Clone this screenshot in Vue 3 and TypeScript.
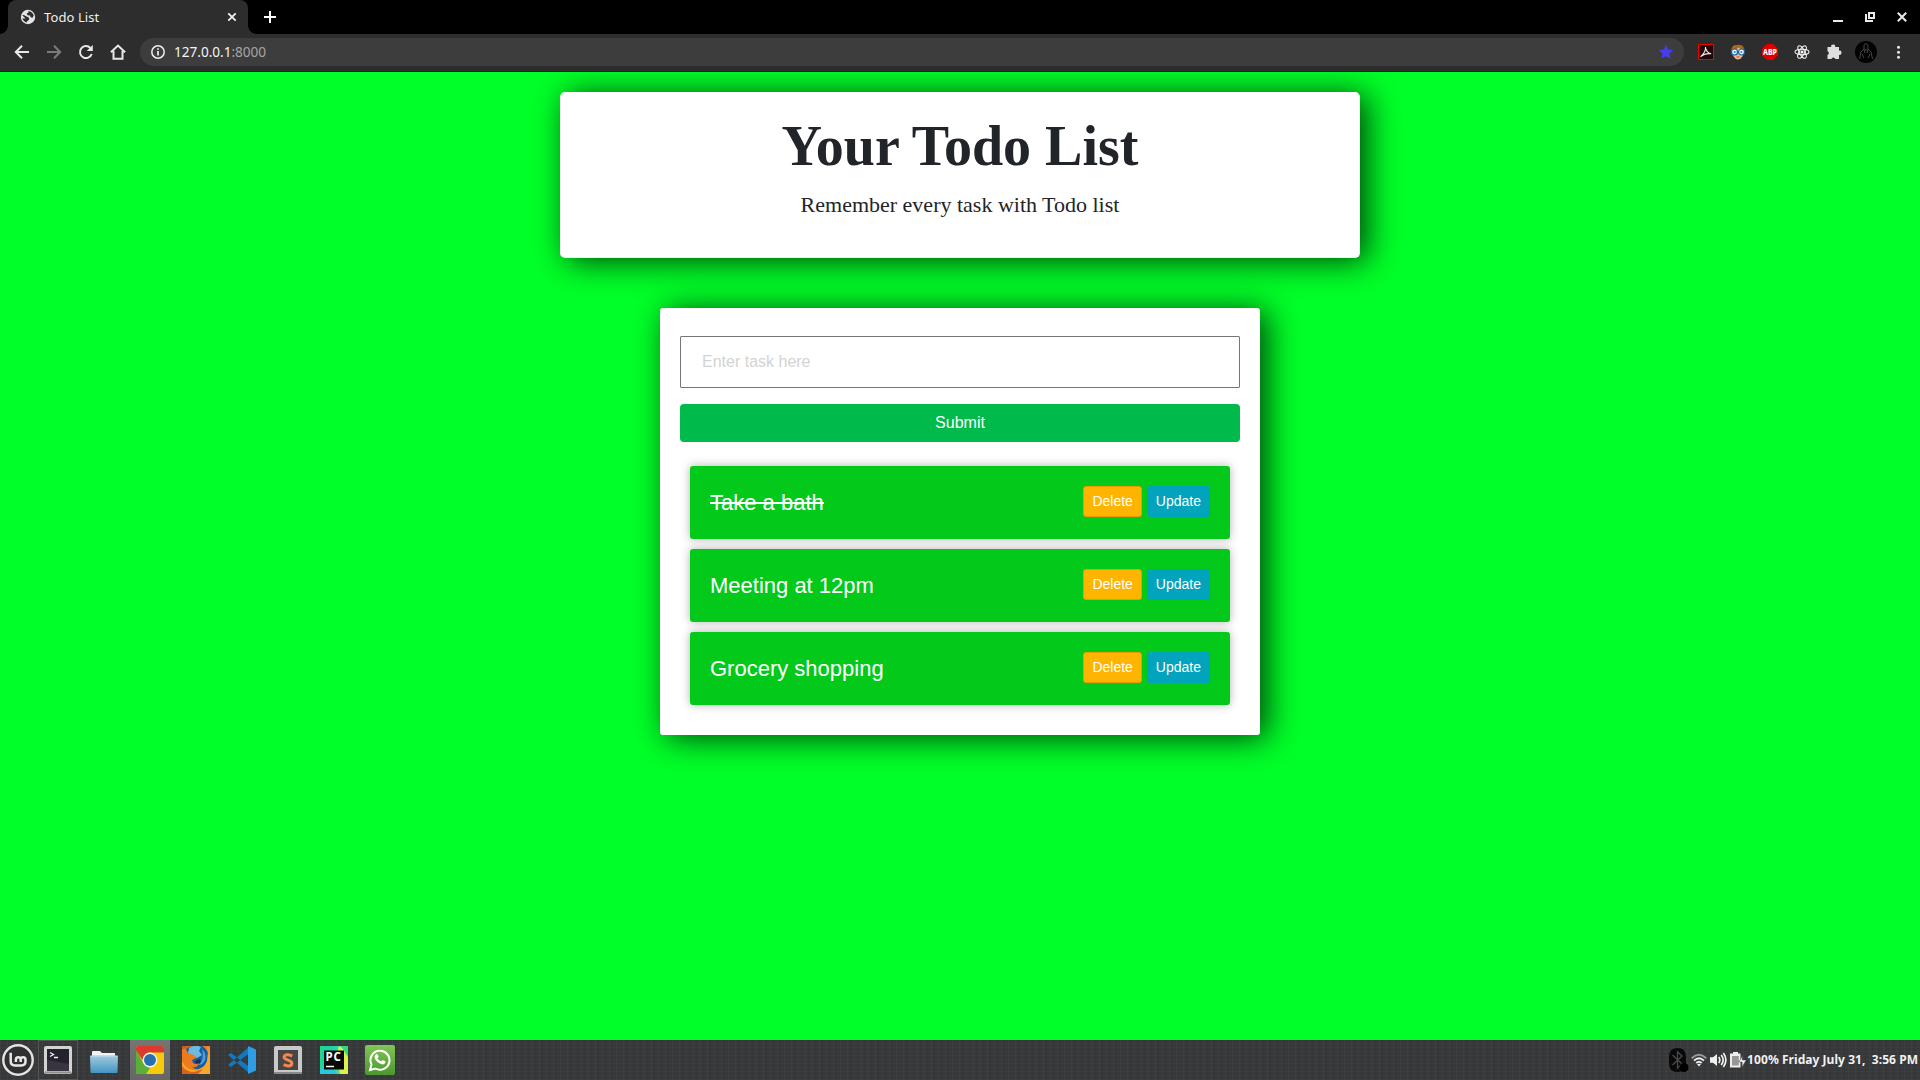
<script setup lang="ts">
import { ref } from 'vue'

interface Task {
  id: number
  title: string
  done: boolean
}

const draft = ref('')
const tasks = ref<Task[]>([
  { id: 1, title: 'Take a bath', done: true },
  { id: 2, title: 'Meeting at 12pm', done: false },
  { id: 3, title: 'Grocery shopping', done: false },
])
</script>

<template>
  <div class="desktop">
    <header class="tabstrip">
      <div class="tab">
        <svg class="favicon" viewBox="0 0 16 16" width="16" height="16">
          <circle cx="8" cy="8" r="7.2" fill="#e3e4e6" />
          <path d="M2.2 6.2Q4 5.800 5.600 7L8.600 8.600Q9.800 9.600 8.800 11L6.800 12.400 7.200 13.600Q3.600 13 2.400 9.600L5.600 9.400zM8.200 2.200Q12.600 2.400 13.700 6.600L12.600 8.800 10.600 8.200 10 6.600 7.600 6.200 6.600 4.600 8.400 3.800z" fill="#2d2d2d" />
        </svg>
        <span class="tab-title">Todo List</span>
        <svg class="tab-close" viewBox="0 0 10 10" width="10" height="10"><path d="M1.300 1.300l7.400 7.400M8.700 1.300L1.300 8.700" stroke="#f1f1f1" stroke-width="1.800" /></svg>
      </div>
      <svg class="new-tab" viewBox="0 0 12 12" width="12" height="12"><path d="M6 0v12M0 6h12" stroke="#fff" stroke-width="2" /></svg>
      <div class="window-controls">
        <svg viewBox="0 0 12 12" width="12" height="12"><path d="M1 10h10" stroke="#e8eaed" stroke-width="2" /></svg>
        <svg viewBox="0 0 12 12" width="12" height="12"><path d="M5 2h5v5H5zM2 3v7h7" fill="none" stroke="#e8eaed" stroke-width="2" /></svg>
        <svg viewBox="0 0 12 12" width="12" height="12"><path d="M1.800 1.800l8.400 8.400M10.200 1.800l-8.400 8.400" stroke="#e8eaed" stroke-width="2" /></svg>
      </div>
    </header>

    <nav class="toolbar">
      <div class="nav-icon"><svg viewBox="0 0 16 16" width="16" height="16"><path d="M15 8H2.300M8 1.800L1.800 8 8 14.200" fill="none" stroke="#e8e8e8" stroke-width="2" /></svg></div>
      <div class="nav-icon"><svg viewBox="0 0 16 16" width="16" height="16"><path d="M1 8h12.700M8 1.800L14.200 8 8 14.200" fill="none" stroke="#7b7b7b" stroke-width="2" /></svg></div>
      <div class="nav-icon"><svg viewBox="0 0 16 16" width="16" height="16"><path d="M13.700 10A6 6 0 1 1 12.400 4" fill="none" stroke="#e8e8e8" stroke-width="2" /><path d="M14.800 1v6H8.700z" fill="#e8e8e8" /></svg></div>
      <div class="nav-icon"><svg viewBox="0 0 16 16" width="16" height="16"><path d="M.9 8.300L8 1.600l7.100 6.700M3.500 7v7.800h9V7" fill="none" stroke="#e8e8e8" stroke-width="2" /></svg></div>
      <div class="omnibox">
        <svg viewBox="0 0 16 16" width="16" height="16"><circle cx="8" cy="8" r="6.200" fill="none" stroke="#eee" stroke-width="1.500" /><path d="M8 7v4.500M8 4.200v1.600" stroke="#eee" stroke-width="1.700" /></svg>
        <span class="url">127.0.0.1<span class="port">:8000</span></span>
        <svg class="star" viewBox="0 0 16 16" width="16" height="16"><path d="M8 .7l2.100 4.900 5.300.5-4 3.500 1.200 5.200L8 12.100l-4.600 2.700 1.200-5.200-4-3.500 5.300-.5z" fill="#443df2" /></svg>
      </div>
      <div class="extensions">
        <div class="ext"><svg viewBox="0 0 16 16" width="16" height="16"><path d="M.5.5h15v15H.5z" fill="#260708" stroke="#f00000" /><path d="M7.400 3c.4 3.500 1.600 5.700 5.600 6.800M7.600 3c0 3.700-1.700 7-5 9.700 3-2.900 6-3.400 10.600-3" fill="none" stroke="#eee" stroke-width="1.100" /></svg></div>
        <div class="ext"><svg viewBox="0 0 16 16" width="16" height="16"><path d="M1.500 10Q0 1 6.500 1q8.500-2 8 8l-2 3.500h-9z" fill="#a7681f" /><path d="M3 5.500q4 0 6-2 1 2 4 2.500v5q-2 4.500-5 4.500T3 11z" fill="#f0b78d" /><circle cx="4.500" cy="8" r="3" fill="#e9fbff" stroke="#1760a9" stroke-width="1.200" /><circle cx="11.500" cy="8" r="3" fill="#e9fbff" stroke="#1760a9" stroke-width="1.200" /><circle cx="4.700" cy="8" r="1.100" fill="#1983d8" /><circle cx="11.300" cy="8" r="1.100" fill="#1983d8" /><path d="M6.500 13h3" stroke="#b64e3d" /></svg></div>
        <div class="ext"><svg viewBox="0 0 16 16" width="16" height="16"><path d="M4.700 0h6.600L16 4.700v6.600L11.300 16H4.700L0 11.300V4.700z" fill="#dc0000" /><text x="1" y="10.900" font-family="Noto Sans, sans-serif" font-weight="800" font-size="8" textLength="14" lengthAdjust="spacingAndGlyphs" fill="#fff">ABP</text></svg></div>
        <div class="ext"><svg viewBox="0 0 16 16" width="16" height="16"><g fill="none" stroke="#f0f0f0" stroke-width="1.100"><ellipse cx="8" cy="8" rx="7" ry="2.700" /><ellipse cx="8" cy="8" rx="7" ry="2.700" transform="rotate(60 8 8)" /><ellipse cx="8" cy="8" rx="7" ry="2.700" transform="rotate(120 8 8)" /></g><circle cx="8" cy="8" r="1.500" fill="#fff" /></svg></div>
        <div class="ext"><svg viewBox="0 0 16 16" width="16" height="16"><path d="M2 3h3.200a2 2 0 1 1 3.900 0H13v3.700a2.100 2.100 0 1 1 0 4.100V15H9.300a2 2 0 0 0-3.900 0H1.500v-4a2 2 0 0 0 0-3.800V3z" fill="#dedede" /></svg></div>
        <div class="ext"><svg viewBox="0 0 22 22" width="22" height="22"><circle cx="11" cy="11" r="11" fill="#020202" /><path d="M9 8V4q2-3 4 0v4M4.500 18L6 11l3-3 1 4M17.500 18L16 11l-3-3-1 4M7 13l2 4M15 13l-2 4M9.500 9h3" fill="none" stroke="#4d4d4d" stroke-width=".9" /></svg></div>
        <div class="ext"><svg viewBox="0 0 4 16" width="4" height="16"><g fill="#e8e8e8"><circle cx="2.500" cy="3.200" r="1.500" /><circle cx="2.500" cy="8.200" r="1.500" /><circle cx="2.500" cy="13.200" r="1.500" /></g></svg></div>
      </div>
    </nav>

    <main class="page">
      <section class="banner">
        <h1>Your Todo List</h1>
        <p>Remember every task with Todo list</p>
      </section>
      <section class="board">
        <form @submit.prevent>
          <input v-model="draft" type="text" placeholder="Enter task here" />
          <button class="submit" type="submit">Submit</button>
        </form>
        <div class="tasks">
          <div v-for="task in tasks" :key="task.id" class="task">
            <span class="title"><span :class="{ done: task.done }">{{ task.title }}</span></span>
            <button class="btn delete">Delete</button>
            <button class="btn update">Update</button>
          </div>
        </div>
      </section>
    </main>

    <footer class="panel">
      <div class="mint">
        <svg viewBox="0 0 32 32" width="32" height="32"><circle cx="16" cy="16" r="14.700" fill="#303030" stroke="#e4e4e4" stroke-width="2.400" /><path d="M8.700 8.700v8.600q0 4.200 4.200 4.200h6.400q4.200 0 4.200-4.200v-1.600q0-2.400-2.400-2.400t-2.400 2.400V18M18.700 15.700q0-2.400-2.400-2.400t-2.400 2.400V18" fill="none" stroke="#e8e8e8" stroke-width="2.500" /></svg>
      </div>
      <div class="launchers">
        <div class="launcher boxed"><svg viewBox="0 0 28 28" width="28" height="28"><rect width="28" height="28" rx="2" fill="#d3d3d1" /><rect x="1" y="25.500" width="26" height="2" fill="#8d8d8b" /><rect x="3" y="3" width="22" height="22" fill="#24222c" /><path d="M3 14l22 4v7H3z" fill="#383540" /><path d="M6 6.500l3.500 2L6 10.500M10 11.500h4" fill="none" stroke="#f4f4f4" stroke-width="1.300" /></svg></div>
        <div class="launcher"><svg viewBox="0 0 28 28" width="28" height="28"><defs><linearGradient id="folder" x2="0" y2="1"><stop stop-color="#a1cae1" /><stop offset="1" stop-color="#4495c0" /></linearGradient></defs><path d="M2 12V6q0-1 1-1h7l2 2h13v6H2z" fill="#f2f2f0" /><path d="M0 10.500q0-1 1-1h26q1 0 1 1L27.500 26q0 1-1 1h-25q-1 0-1-1z" fill="url(#folder)" /><path d="M1 10.300h26" stroke="#b8d8e8" /></svg></div>
        <div class="launcher active"><svg viewBox="0 0 28 28" width="28" height="28"><rect width="28" height="28" rx="2" fill="#f6cb0c" /><path d="M0 3l7 14 7 5-4 6H2q-2 0-2-2z" fill="#5bae38" /><path d="M2 0h24q2 0 2 2v4.500H14q-6 0-7.500 7.500L0 4V2q0-2 2-2z" fill="#dc3a2c" /><circle cx="14" cy="14" r="7.400" fill="#f2f3f1" /><circle cx="14" cy="14" r="6" fill="#286fb2" /></svg></div>
        <div class="launcher"><svg viewBox="0 0 28 28" width="28" height="28"><defs><linearGradient id="fox" x2="1" y2="1"><stop stop-color="#c9571f" /><stop offset=".5" stop-color="#f58a1a" /><stop offset="1" stop-color="#ffd94a" /></linearGradient></defs><rect width="28" height="28" rx="1" fill="url(#fox)" /><path d="M4 3Q10-1 20 0q6 3 7 11 0 9-8 13Q9 25 7 16z" fill="#1c5c9e" /><path d="M7 2q6-4 12-1l-2 4 3 4-5 3-5-2-4-3z" fill="#6bbbe0" /><path d="M20 3q5 5 3 11-2 5-7 5 7-5 4-16z" fill="#48a1d4" /><path d="M13 15l5-2 1 3-4 4z" fill="#102f66" /><path d="M0 4l3-2 3 5 6 2 2 3-4 2 1 3q3 2 6 0-1 5-7 4l5 3q-8 2-12-4L0 13z" fill="#ee7a20" /><path d="M0 15q4 9 13 9 9-1 12-9l1-9 2 5v17H0z" fill="#f8a824" /><path d="M0 20q5 6 12 6l9-3-5 5H0z" fill="#d9621d" /></svg></div>
        <div class="launcher"><svg viewBox="0 0 28 28" width="28" height="28"><path d="M0 9l3-2 18 13.500V27zM0 19l3 2L21 7.500V1z" fill="#1179bf" /><path d="M20 0l8 3.500v21L20 28z" fill="#2f9de4" /></svg></div>
        <div class="launcher"><svg viewBox="0 0 28 28" width="28" height="28"><rect width="28" height="28" rx="2" fill="#c9c9c9" /><rect y="26" width="28" height="2" rx="1" fill="#898989" /><rect x="4" y="4" width="20" height="20" fill="#464646" /><path d="M18.300 9.800q-7.300-2.700-8.200 1.100c-.4 3.800 8.300 2.600 7.800 6.500-.8 4-5.800 2.600-8.300 1.300" fill="none" stroke="#f4874f" stroke-width="3" /></svg></div>
        <div class="launcher"><svg viewBox="0 0 28 28" width="28" height="28"><defs><linearGradient id="pc" x2="1" y2=".2"><stop stop-color="#21d789" /><stop offset=".45" stop-color="#20cfb0" /><stop offset="1" stop-color="#75de72" /></linearGradient></defs><path d="M0 0h28v28H0z" fill="url(#pc)" /><path d="M19 0l9 6v22h-8L17 8z" fill="#dcf14b" /><path d="M0 23l10-3 8 8H0z" fill="#29c8db" /><path d="M21 0h7v11z" fill="#36d67d" /><rect x="4" y="4.500" width="20" height="19" fill="#070707" /><path d="M6 20.500h8" stroke="#fff" stroke-width="1.500" /><text x="5.500" y="14.700" font-family="Noto Sans, sans-serif" font-weight="700" font-size="11.500" textLength="15.500" fill="#fff">PC</text></svg></div>
        <div class="launcher"><svg viewBox="0 0 30 30" width="30" height="30"><defs><linearGradient id="wa" x2="0" y2="1"><stop stop-color="#83c556" /><stop offset="1" stop-color="#4b982f" /></linearGradient></defs><rect width="30" height="30" rx="2" fill="url(#wa)" /><path d="M5 25l1.500-5.500A9.500 9.500 0 1 1 10.300 23.500z" fill="none" stroke="#fff" stroke-width="2" /><path d="M11 9.300q1.200-.8 1.700.3l.9 2.100-1.100 1.500q1.200 2.300 3.800 3.400l1.400-1.500 2.600 1.200q.6.500-.2 2-1.400 1.700-4 .8-4.900-1.800-6.500-6-.4-2.500 1.400-3.800z" fill="#fff" /></svg></div>
      </div>
      <div class="tray">
        <svg viewBox="0 0 20 24" width="20" height="24"><path d="M0 9Q0 0 8.500 0T17 9v6q0 9-8.500 9T0 15z" fill="#090909" /><path d="M3.500 7l9.500 9-4.500 4V4L13 8l-9.500 9" fill="none" stroke="#4b4b4b" stroke-width="1.300" /><circle cx="15" cy="19.500" r="4.500" fill="#000" /></svg>
        <svg class="wifi" viewBox="0 0 16 14" width="16" height="14"><g fill="none" stroke-width="1.900"><path d="M.7 5.200q7.300-6.800 14.600 0" stroke="#9a9a9a" /><path d="M3 7.600q5-4.700 10 0M5.300 10q2.700-2.500 5.400 0" stroke="#eee" /></g><path d="M6 11.300q2-1.300 4 0l-2 2.200z" fill="#eee" /></svg>
        <svg class="vol" viewBox="0 0 18 16" width="18" height="16"><path d="M0 5.300h3L7 2v12l-4-3.300H0z" fill="#f0f0f0" /><path d="M8.700 5q2.300 3 0 6M11.200 3q4 5 0 10M13.400 1q5 7 0 14" fill="none" stroke="#f0f0f0" stroke-width="1.700" /></svg>
        <svg class="bat" viewBox="0 0 17 16" width="17" height="16"><path d="M0 1.500h3V0h5v1.500h2.500v14H0z" fill="#eee" /><path d="M2 4h6.800v9.500H2z" fill="#989898" /><path d="M12.300 4v4h3.900l-4.100 7v-5H8.800z" fill="#f5f5f5" stroke="#414141" stroke-width=".5" /></svg>
        <span class="percent">100%</span>
        <span class="clock">Friday July 31,&nbsp; 3:56 PM</span>
      </div>
    </footer>
  </div>
</template>

<style>
body {
  margin: 0;
  overflow: hidden;
}
</style>

<style scoped>
* {
  box-sizing: border-box;
}
svg {
  display: block;
  flex: none;
}
.desktop {
  width: 1920px;
  height: 1080px;
  display: flex;
  flex-direction: column;
  overflow: hidden;
  font-family: 'Liberation Sans', Arial, sans-serif;
}
.tabstrip {
  height: 34px;
  flex: none;
  display: flex;
  align-items: center;
  padding-left: 8px;
  background: #000;
}
.tab {
  position: relative;
  width: 240px;
  height: 34px;
  display: flex;
  align-items: center;
  padding: 0 11px 0 12px;
  background: #2d2d2d;
  border-radius: 8px 8px 0 0;
}
.tab::before,
.tab::after {
  content: '';
  position: absolute;
  bottom: 0;
  width: 8px;
  height: 8px;
}
.tab::before {
  left: -8px;
  background: radial-gradient(circle at 0 0, transparent 7.5px, #2d2d2d 8px);
}
.tab::after {
  right: -8px;
  background: radial-gradient(circle at 100% 0, transparent 7.5px, #2d2d2d 8px);
}
.tab-title {
  margin-left: 8px;
  color: #f0f0f0;
  font: 13px/18px 'Noto Sans', sans-serif;
  letter-spacing: 0.100px;
}
.tab-close {
  margin-left: auto;
}
.new-tab {
  margin-left: 16px;
}
.window-controls {
  display: flex;
  gap: 20px;
  margin-left: auto;
  padding-right: 12px;
}
.toolbar {
  height: 38px;
  flex: none;
  display: flex;
  align-items: center;
  padding: 0 6px 2px;
  background: #2d2d2d;
  box-shadow: inset 0 -1px #252525;
}
.nav-icon,
.ext {
  width: 32px;
  display: flex;
  justify-content: center;
}
.omnibox {
  flex: 1;
  height: 28px;
  display: flex;
  align-items: center;
  margin-left: 6px;
  padding: 0 10px;
  border-radius: 14px;
  background: #3d3d3d;
}
.url {
  margin-left: 8px;
  color: #f4f4f4;
  font: 13.600px/20px 'Noto Sans', sans-serif;
  letter-spacing: -0.020px;
}
.port {
  color: #a5a5a5;
}
.star {
  margin-left: auto;
}
.extensions {
  display: flex;
  align-items: center;
  margin-left: 6px;
}
.page {
  flex: 1;
  min-height: 0;
  display: flex;
  flex-direction: column;
  align-items: center;
  padding-top: 20px;
  overflow: hidden;
  background: #00ff28;
}
.banner,
.board {
  background: #fff;
  box-shadow: 7px 3px 32px rgba(0, 0, 0, 0.75);
}
.banner {
  width: 800px;
  height: 166px;
  flex: none;
  padding-top: 20px;
  border: 1px solid #eee;
  border-top-color: #fff;
  border-radius: 5px;
  color: #212529;
  font-family: 'Liberation Serif', 'Times New Roman', serif;
  text-align: center;
}
h1 {
  margin: 0 0 8px;
  font-size: 56px;
  line-height: 67px;
  font-weight: 700;
}
p {
  margin: 0;
  font-size: 22px;
  line-height: 33px;
}
.board {
  width: 600px;
  height: 427px;
  flex: none;
  margin-top: 50px;
  padding: 28px 20px 30px;
  border-radius: 3px;
}
form {
  display: flex;
  flex-direction: column;
  gap: 16px;
}
input {
  appearance: none;
  height: 52px;
  padding: 0 21px;
  border: 1px solid #767676;
  border-radius: 1px;
  outline: none;
  font: 16px 'Liberation Sans', Arial, sans-serif;
}
input::placeholder {
  color: #d3d3d3;
}
.submit {
  height: 38px;
  border: 0;
  border-radius: 4px;
  background: #00bb4b;
  color: #fff;
  font: 16px/24px 'Liberation Sans', Arial, sans-serif;
  padding: 0 0 1px;
}
.tasks {
  display: flex;
  flex-direction: column;
  gap: 10px;
  margin: 24px 10px 0;
}
.task {
  height: 73px;
  display: flex;
  align-items: flex-start;
  padding: 20px;
  border-radius: 3px;
  background: #03c91b;
  box-shadow: 0 0 10px rgba(0, 0, 0, 0.3);
}
.title {
  flex: 1;
  color: #fff;
  font-size: 22px;
  line-height: 33px;
}
.done {
  text-decoration: line-through;
}
.btn {
  height: 31px;
  padding: 0 8px 1px;
  border: 1px solid #02a3bc;
  border-radius: 3px;
  background: #02a3bc;
  color: #fff;
  font: 14px/21px 'Liberation Sans', Arial, sans-serif;
}
.delete {
  margin-right: 5px;
  border-color: #ee9b00;
  background: #ffb400;
}
.panel {
  height: 40px;
  flex: none;
  display: flex;
  align-items: center;
  color: #f1f1f1;
  background:
    repeating-linear-gradient(90deg, rgba(255, 255, 255, 0.025) 0 1px, transparent 1px 3px, rgba(0, 0, 0, 0.05) 3px 4px, transparent 4px 7px),
    repeating-linear-gradient(0deg, rgba(255, 255, 255, 0.025) 0 1px, transparent 1px 4px),
    #373839;
}
.mint {
  padding-left: 2px;
}
.launchers {
  display: flex;
  gap: 6px;
  margin-left: 4px;
}
.launcher {
  width: 40px;
  height: 40px;
  display: flex;
  align-items: center;
  justify-content: center;
}
.boxed {
  border: 1px solid #555;
}
.active {
  background: linear-gradient(#757575, #666);
}
.tray {
  display: flex;
  align-items: center;
  margin-left: auto;
  padding-right: 2px;
  font: 700 12px/18px 'Noto Sans', sans-serif;
  white-space: nowrap;
}
.wifi {
  margin-left: 2px;
}
.vol {
  margin-left: 3px;
}
.bat {
  margin-left: 2px;
}
.percent {
  width: 34px;
  letter-spacing: 0.150px;
}
.clock {
  width: 137px;
  text-align: right;
  letter-spacing: 0.050px;
}
</style>
